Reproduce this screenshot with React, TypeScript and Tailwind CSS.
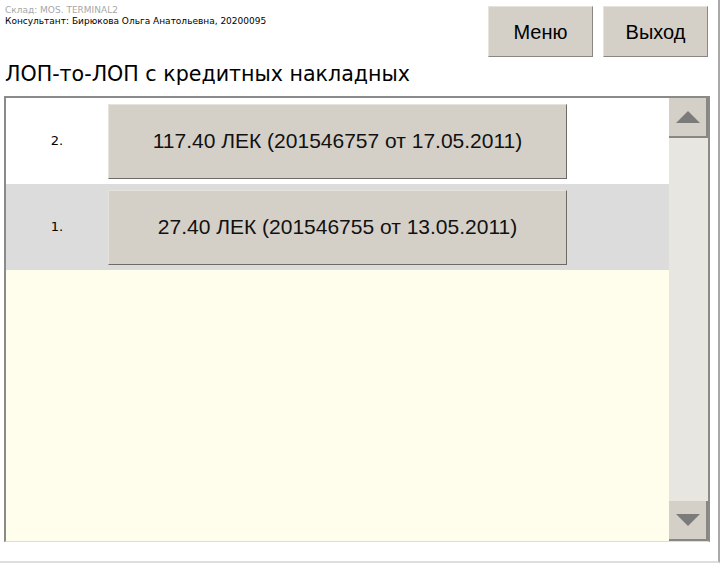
import React from "react";

const rows = [
  { n: "2.", label: "117.40 ЛЕК (201546757 от 17.05.2011)", bg: "bg-white" },
  { n: "1.", label: "27.40 ЛЕК (201546755 от 13.05.2011)", bg: "bg-[#dcdcdc]" },
];

function TopButton({ children }: { children: React.ReactNode }) {
  return (
    <button className="w-[105px] h-[51px] bg-[#d4d0c8] border border-t-[#e6e3dd] border-l-[#e6e3dd] border-r-[#8a8782] border-b-[#8a8782] text-[20px] text-black font-['Liberation_Sans',Arial,sans-serif]">
      {children}
    </button>
  );
}

function ScrollButton({ up }: { up?: boolean }) {
  return (
    <div className="h-[40px] bg-[#d4d0c8] border-r-2 border-b-2 border-[#8a8782] flex items-center justify-center">
      <svg width="24" height="12" viewBox="0 0 24 12" aria-hidden="true">
        {up ? (
          <polygon points="0,12 12,0 24,12" fill="#7b7b7b" />
        ) : (
          <polygon points="0,0 24,0 12,12" fill="#7b7b7b" />
        )}
      </svg>
    </div>
  );
}

export default function App() {
  return (
    <div className="w-[720px] h-[563px] bg-white border-r-2 border-r-[#a9a9a9] border-b-2 border-b-[#dedede] flex flex-col font-['DejaVu_Sans',Verdana,sans-serif] overflow-hidden">
      {/* Header */}
      <div className="flex justify-between h-[96px]">
        <div className="pl-[5px] pt-[5px]">
          <div className="text-[9px] leading-[11px] text-[#a8a8a8]">Склад: MOS. TERMINAL2</div>
          <div className="text-[9px] leading-[11px] text-black">Консультант: Бирюкова Ольга Анатольевна, 20200095</div>
          <h1 className="mt-[35px] text-[20.6px] leading-[25px] text-black">ЛОП-то-ЛОП с кредитных накладных</h1>
        </div>
        <div className="flex gap-[10px] pt-[6px] pr-[10px]">
          <TopButton>Меню</TopButton>
          <TopButton>Выход</TopButton>
        </div>
      </div>

      {/* List box */}
      <div className="ml-[4px] w-[706px] h-[446px] border-l-2 border-t-2 border-r-2 border-b border-l-[#8a8a8a] border-t-[#8a8a8a] border-r-[#8a8a8a] border-b-[#dcdcdc] flex">
        <div className="flex-1 bg-[#fffdeb] flex flex-col">
          {rows.map((r) => (
            <div key={r.n} className={`h-[86px] flex items-center ${r.bg}`}>
              <div className="w-[102px] text-center text-[13px] text-black">{r.n}</div>
              <button className="w-[459px] h-[75px] bg-[#d4d0c8] border border-t-[#e6e3dd] border-l-[#e6e3dd] border-r-[#6e6b67] border-b-[#6e6b67] text-[21px] text-[#111] font-['Liberation_Sans',Arial,sans-serif]">
                {r.label}
              </button>
            </div>
          ))}
        </div>
        <div className="w-[39px] bg-[#e8e6e1] flex flex-col justify-between">
          <ScrollButton up />
          <ScrollButton />
        </div>
      </div>
    </div>
  );
}
